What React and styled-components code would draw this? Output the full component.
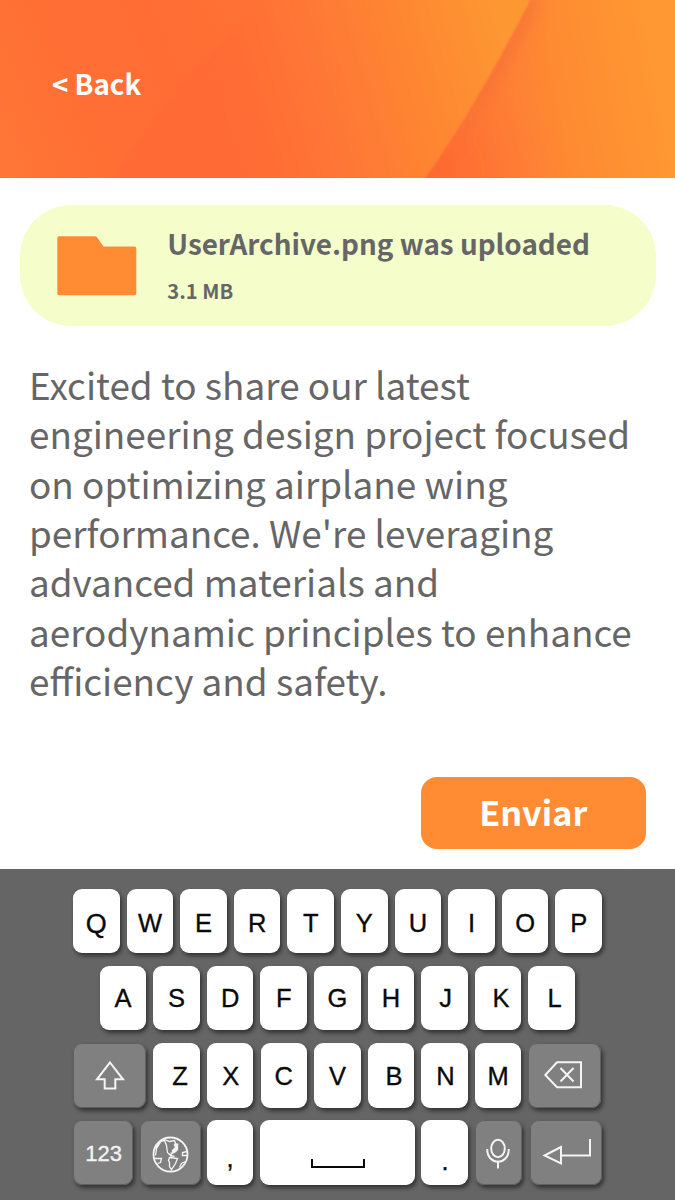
import React from "react";
import styled, { createGlobalStyle } from "styled-components";

const Global = createGlobalStyle`
  *, *::before, *::after { box-sizing: border-box; }
  body { margin: 0; background: #fff; }
`;

const sans = `"Noto Sans CJK JP", "Noto Sans CJK SC", sans-serif`;

const Screen = styled.main`
  display: flex;
  flex-direction: column;
  width: 675px;
  height: 1200px;
  overflow: hidden;
  background: #fff;
  font-family: ${sans};
  color: #666;
`;

const Header = styled.header`
  position: relative;
  flex: none;
  height: 177.6px;
  padding: 62px 0 0 52px;
  overflow: hidden;
`;

const Backdrop = styled.svg`
  position: absolute;
  inset: 0;
  display: block;
`;

const BackLink = styled.a`
  position: relative;
  display: inline-block;
  font-size: 27.7px;
  font-weight: 700;
  line-height: 42px;
  color: #fff;
  white-space: nowrap;
`;

const UploadCard = styled.section`
  flex: none;
  display: flex;
  align-items: flex-start;
  height: 121.6px;
  margin: 27.2px 19.5px 0 19.5px;
  padding: 31px 0 0 37px;
  border-radius: 51px;
  background: #f5fecb;
`;

const FileInfo = styled.div`
  margin: -14px 0 0 30.8px;
  font-weight: 700;
  white-space: nowrap;
`;

const FileName = styled.div`
  font-size: 27.84px;
  line-height: 42px;
`;

const FileSize = styled.div`
  margin-top: 12px;
  font-size: 20.2px;
  line-height: 30px;
`;

const Message = styled.p`
  flex: none;
  height: 346px;
  margin: 33.4px 0 0 29px;
  font-size: 36.87px;
  line-height: 49.4px;
  white-space: pre-line;
`;

const Actions = styled.div`
  flex: none;
  display: flex;
  justify-content: flex-end;
  margin-top: 71.6px;
  padding-right: 29px;
`;

const SendButton = styled.button`
  width: 225.5px;
  height: 72px;
  padding: 0 0 3px;
  border: 0;
  border-radius: 16px;
  background: #ff8c33;
  color: #fff;
  font: 700 34.2px/69px ${sans};
`;

const Keyboard = styled.section`
  flex: 1;
  display: flex;
  flex-direction: column;
  gap: 12.7px;
  margin-top: 20px;
  padding: 19.4px 0 0 73.1px;
  background: #656565;
  font-family: "Liberation Sans", Arial, sans-serif;
`;

const KeyRow = styled.div`
  display: flex;
  gap: 7.05px;
  height: 64.5px;
  padding-left: ${(p) => p.$indent || 0}px;
`;

const Key = styled.div`
  flex: none;
  display: flex;
  align-items: center;
  justify-content: center;
  width: ${(p) => p.$w || 46.55}px;
  height: 64.5px;
  margin-left: ${(p) => p.$gap || 0}px;
  border-radius: 9px;
  background: ${(p) => (p.$dark ? "#808080" : "#fff")};
  color: ${(p) => (p.$dark ? "#f4f4f4" : "#0a0a0a")};
  box-shadow: ${(p) => (p.$dark ? "inset 0 0 0 1px #606060, " : "")}2px 3px 4px rgba(0, 0, 0, 0.5);
`;

const Glyph = styled.span`
  font-size: ${(p) => p.$size || 25.5}px;
  line-height: 1;
  -webkit-text-stroke: 0.35px currentColor;
  transform: translate(${(p) => p.$dx || 0}px, ${(p) => p.$dy || 0}px);
`;

const Icon = styled.svg`
  display: block;
  flex: none;
  fill: none;
  stroke: currentColor;
  overflow: visible;
`;

const rows = {
  top: "QWERTYUIOP",
  middle: "ASDFGHJKL",
  bottom: "ZXCVBNM",
};

const nudge = { J: 1, K: 3, L: 3, Z: 3.5, B: 3, N: 0.9, X: 0.6 };

function Letters({ text, dy }) {
  return [...text].map((c) => (
    <Key key={c}>
      <Glyph $dx={nudge[c]} $dy={c === "Q" ? dy + 0.8 : dy} $size={c === "Q" ? 27 : 25.5}>{c}</Glyph>
    </Key>
  ));
}

const fold = "M533 -5 Q504 52 471 108 Q450 143 422 183";

function HeaderArt() {
  return (
    <Backdrop width="675" height="178" viewBox="0 0 675 178" preserveAspectRatio="none">
      <defs>
        <linearGradient id="left" gradientUnits="userSpaceOnUse" x1="-20" y1="130" x2="280" y2="0">
          <stop offset="0" stopColor="#ff7836" />
          <stop offset="0.25" stopColor="#ff7035" />
          <stop offset="0.6" stopColor="#ff6d34" />
          <stop offset="1" stopColor="#ff7335" />
        </linearGradient>
        <linearGradient id="mid" gradientUnits="userSpaceOnUse" x1="185" y1="90" x2="490" y2="0">
          <stop offset="0" stopColor="#ff6a34" />
          <stop offset="0.2" stopColor="#ff6d34" />
          <stop offset="0.5" stopColor="#fe7b34" />
          <stop offset="0.8" stopColor="#fe8b33" />
          <stop offset="1" stopColor="#fd9733" />
        </linearGradient>
        <linearGradient id="right" gradientUnits="userSpaceOnUse" x1="440" y1="100" x2="660" y2="60">
          <stop offset="0" stopColor="#fe7635" />
          <stop offset="0.28" stopColor="#fe7f35" />
          <stop offset="0.55" stopColor="#fe8b33" />
          <stop offset="1" stopColor="#ff9833" />
        </linearGradient>
        <radialGradient id="glow" gradientUnits="userSpaceOnUse" cx="440" cy="170" r="110">
          <stop offset="0" stopColor="#ff6731" stopOpacity="0.85" />
          <stop offset="1" stopColor="#ff7a34" stopOpacity="0" />
        </radialGradient>
        <filter id="soft" x="-5%" y="-5%" width="110%" height="110%">
          <feGaussianBlur stdDeviation="1" />
        </filter>
        <filter id="softer" x="-5%" y="-5%" width="110%" height="110%">
          <feGaussianBlur stdDeviation="3" />
        </filter>
        <filter id="shade" x="-50%" y="-20%" width="200%" height="140%">
          <feGaussianBlur stdDeviation="8" />
        </filter>
        <clipPath id="panel">
          <path d={`${fold} H690 V-5 Z`} />
        </clipPath>
      </defs>
      <rect width="675" height="178" fill="url(#left)" />
      <path d="M275 -15 C225 40 165 90 100 200 H560 V-15 Z" fill="url(#mid)" filter="url(#softer)" />
      <g filter="url(#soft)">
        <path d={`${fold} H690 V-5 Z`} fill="url(#right)" />
        <g clipPath="url(#panel)">
          <path d={fold} fill="none" stroke="#f46c36" strokeOpacity="0.6" strokeWidth="20" filter="url(#shade)" />
        </g>
        <path d={`${fold} H690 V-5 Z`} fill="url(#glow)" />
      </g>
    </Backdrop>
  );
}

export default function App() {
  return (
    <Screen>
      <Global />
      <Header>
        <HeaderArt />
        <BackLink>&lt; Back</BackLink>
      </Header>

      <UploadCard>
        <svg width="80" height="60" viewBox="0 0 80 60">
          <path d="M2 0.2 H38 Q39.2 0.2 40 1.3 L46.5 10.4 H77.6 Q79.3 10.4 79.3 12 V57.6 Q79.3 59.2 77.6 59.2 H2 Q0.3 59.2 0.3 57.6 V1.9 Q0.3 0.2 2 0.2 Z" fill="#ff8c33" />
        </svg>
        <FileInfo>
          <FileName>UserArchive.png was uploaded</FileName>
          <FileSize>3.1 MB</FileSize>
        </FileInfo>
      </UploadCard>

      <Message>
        {"Excited to share our latest\nengineering design project focused\non optimizing airplane wing\nperformance. We're leveraging\nadvanced materials and\naerodynamic principles to enhance\nefficiency and safety."}
      </Message>

      <Actions>
        <SendButton>Enviar</SendButton>
      </Actions>

      <Keyboard>
        <KeyRow>
          <Letters text={rows.top} dy={2.6} />
        </KeyRow>
        <KeyRow $indent={26.6}>
          <Letters text={rows.middle} dy={1} />
        </KeyRow>
        <KeyRow>
          <Key $dark $w={73.2}>
            <Icon width="30" height="29" viewBox="0 0 30 29" strokeWidth="2">
              <path d="M15 1.5 L28 18.3 H20.3 V27.5 H9.7 V18.3 H2 Z" />
            </Icon>
          </Key>
          <Letters text={rows.bottom} dy={1} />
          <Key $dark $w={72.5}>
            <Icon width="38" height="28" viewBox="0 0 38 28" strokeWidth="2" transform="translate(-2 0)">
              <path d="M1.3 14 L13 1.3 H37 V26.2 H13 Z M16.5 7 L29.5 20.5 M29.5 7 L16.5 20.5" />
            </Icon>
          </Key>
        </KeyRow>
        <KeyRow>
          <Key $dark $w={60.2}>
            <Glyph $size={22} $dx={0.5} $dy={1}>123</Glyph>
          </Key>
          <Key $dark $w={60.2}>
            <Icon width="36" height="36" viewBox="0 0 36 36" strokeWidth="1.3" transform="translate(0.5 1.5)">
              <circle cx="18" cy="18" r="17" strokeWidth="1.8" />
              <path d="M3 12 L7 5 L12 4 L14 9 L15 16 L18 19 L22 20 M9 4 L4 12 L3 19 M12 3 L17 5 L22 4 L23 7 L25 8 L25 13 L22 16 L19 17 M19 16 L18 20 M1.5 22 L9 22 L8 26 L5 27 M17 21 L25 22 L23 27 L19 33 L17 30 L17 26 L16 24 Z M34.5 15 L30 16 L30 19 L35 19 M33 25 L29 27 L27 31" />
              <path d="M20 14 L23 11 L22 8 L25 8 L24 14 L20 16 Z" fill="currentColor" />
            </Icon>
          </Key>
          <Key $gap={-0.7}>
            <Glyph $dy={6}>,</Glyph>
          </Key>
          <Key $w={154.3}>
            <Icon width="54" height="9" viewBox="0 0 54 9" strokeWidth="2" transform="translate(0 11)">
              <path d="M1 0 V8 H53 V0" />
            </Icon>
          </Key>
          <Key $gap={-0.7}>
            <Glyph $dx={0.6} $dy={9}>.</Glyph>
          </Key>
          <Key $dark $w={47}>
            <Icon width="24" height="30" viewBox="0 0 24 30" strokeWidth="2" transform="translate(0 1)">
              <ellipse cx="12" cy="9.5" rx="6.8" ry="8.7" />
              <path d="M1.2 10 C1.2 27 22.8 27 22.8 10 M12 23 V29.5" />
            </Icon>
          </Key>
          <Key $dark $w={72} $gap={1.3}>
            <Icon width="48" height="26" viewBox="0 0 48 26" strokeWidth="2" transform="translate(1 -1)">
              <path d="M47 0 V16.5 H18 M18 8 V24.5 L1.5 16.5 Z" />
            </Icon>
          </Key>
        </KeyRow>
      </Keyboard>
    </Screen>
  );
}
